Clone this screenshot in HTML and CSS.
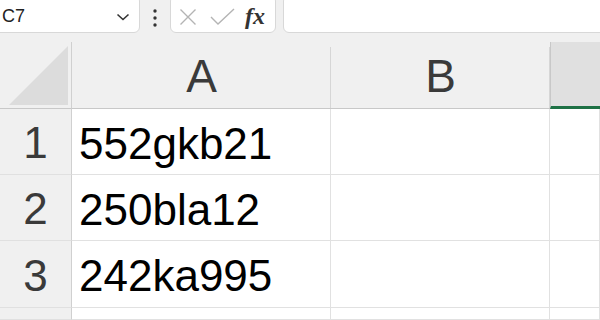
FILE: index.html
```html
<!DOCTYPE html>
<html lang="en">
<head>
    <meta charset="UTF-8">
    <title>Planilha</title>
    <link rel="stylesheet" href="styles.css">
</head>
<body>

    <div class="toolbar">
        <div class="namebox">
            <span class="ref">C7</span>
            <svg class="chev" width="14" height="8" viewBox="0 0 14 8">
                <path d="M1.5 1.5 L7 6.5 L12.5 1.5" fill="none" stroke="#333" stroke-width="1.6"/>
            </svg>
        </div>
        <svg class="dots" width="6" height="20" viewBox="0 0 6 20">
            <circle cx="3" cy="3" r="1.7" fill="#333"/>
            <circle cx="3" cy="10" r="1.7" fill="#333"/>
            <circle cx="3" cy="17" r="1.7" fill="#333"/>
        </svg>
        <div class="fxbox">
            <svg width="18" height="18" viewBox="0 0 18 18">
                <path d="M1.5 1.5 L16.5 16.5 M16.5 1.5 L1.5 16.5" stroke="#b4b4b4" stroke-width="1.4"/>
            </svg>
            <svg width="25" height="17" viewBox="0 0 25 17">
                <path d="M1 9 L8 16 L24 1" fill="none" stroke="#b4b4b4" stroke-width="1.4"/>
            </svg>
            <span class="fx">fx</span>
        </div>
        <div class="formula"></div>
    </div>

    <div class="grade">
        <div class="canto"><div class="tri"></div></div>
        <div class="colhead">A</div>
        <div class="colhead">B</div>
        <div class="colhead sel"></div>

        <div class="rowhead">1</div>
        <div class="cel">552gkb21</div>
        <div class="cel"></div>
        <div class="cel"></div>

        <div class="rowhead">2</div>
        <div class="cel">250bla12</div>
        <div class="cel"></div>
        <div class="cel"></div>

        <div class="rowhead">3</div>
        <div class="cel">242ka995</div>
        <div class="cel"></div>
        <div class="cel"></div>

        <div class="rowhead"></div>
        <div class="cel"></div>
        <div class="cel"></div>
        <div class="cel"></div>
    </div>

</body>
</html>
```

FILE: styles.css
```css
body {
    margin: 0;
    padding: 0;
    height: 320px;
    background-color: #f0f0f0;
    font-family: "Liberation Sans", Arial, sans-serif;
    overflow: hidden;
}

.toolbar {
    display: flex;
    align-items: center;
    height: 33px;
}

.namebox,
.fxbox,
.formula {
    background: white;
    border: 1px solid #d8d8d8;
    border-radius: 6px;
    height: 38px;
    margin-top: -6px;
    box-sizing: border-box;
    display: flex;
    align-items: center;
    padding-top: 6px;
}

.namebox {
    width: 146px;
    margin-left: -6px;
    padding-left: 7px;
    padding-right: 8px;
    justify-content: space-between;
}

.ref {
    font-size: 18px;
    color: #222;
}

.chev {
    margin-right: 1px;
}

.dots {
    margin-left: 12px;
    margin-right: 12px;
    padding-top: 2px;
}

.fxbox {
    width: 106px;
    padding-left: 8px;
    gap: 13px;
}

.fx {
    font-family: "Liberation Serif", "Times New Roman", serif;
    font-style: italic;
    font-weight: bold;
    font-size: 24px;
    color: #333;
    margin-left: -3px;
}

.formula {
    flex: 1;
    margin-left: 7px;
    margin-right: -10px;
}

.grade {
    display: grid;
    grid-template-columns: 72px 259px 219px 1fr;
    grid-template-rows: 67px 66px 66px 67px 12px;
    margin-top: 9px;
}

.canto {
    display: flex;
    align-items: flex-end;
    justify-content: flex-end;
    padding: 0 3px 3px 0;
    border-bottom: 1px solid #c8c8c8;
    border-right: 1px solid #d0d0d0;
    box-sizing: border-box;
}

.tri {
    width: 59px;
    height: 59px;
    background: #dcdcdc;
    clip-path: polygon(100% 0, 100% 100%, 0 100%);
}

.colhead {
    display: flex;
    align-items: center;
    justify-content: center;
    font-size: 46px;
    color: #3a3a3a;
    background: linear-gradient(#d6d6d6, #d6d6d6) right bottom / 1px calc(100% - 5px) no-repeat, #f0f0f0;
    border-bottom: 1px solid #c8c8c8;
    box-sizing: border-box;
    padding-top: 2px;
}

.colhead.sel {
    background: #e0e0e0;
    border-bottom: 3px solid #1e7145;
    border-left: 1px solid #c8c8c8;
}

.rowhead {
    display: flex;
    align-items: center;
    justify-content: center;
    font-size: 44px;
    color: #3a3a3a;
    border-right: 1px solid #d0d0d0;
    border-bottom: 1px solid #e0e0e0;
    box-sizing: border-box;
    padding-top: 3px;
}

.cel {
    background: white;
    font-size: 44px;
    color: #000;
    line-height: 66px;
    padding: 2px 0 0 7px;
    border-right: 1px solid #e1e1e1;
    border-bottom: 1px solid #e1e1e1;
    box-sizing: border-box;
    white-space: nowrap;
    overflow: hidden;
}
```
